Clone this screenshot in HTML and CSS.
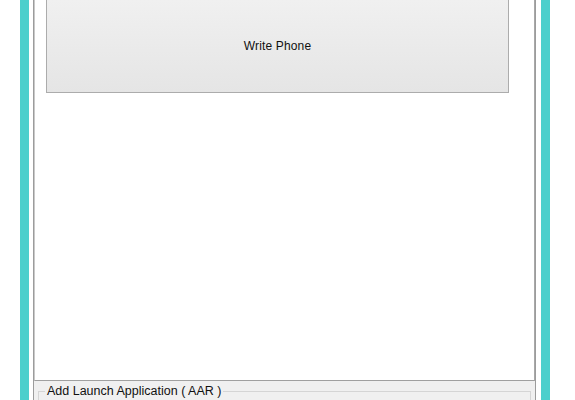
FILE: index.html
```html
<!DOCTYPE html>
<html lang="en">
  <head>
    <meta charset="utf-8">
    <title>Write Phone</title>
    <link rel="stylesheet" href="styles.css">
  </head>
  <body>
    <div class="frame">
      <div class="client">
        <div class="top">
          <button class="write-btn" type="button">Write Phone</button>
        </div>
        <div class="bottom">
          <fieldset class="group">
            <legend>Add Launch Application ( AAR )</legend>
          </fieldset>
        </div>
      </div>
    </div>
  </body>
</html>
```

FILE: styles.css
```css
html, body {
  margin: 0;
  background: #fff;
  font-family: "Liberation Sans", Arial, sans-serif;
  font-size: 12px;
  overflow: hidden;
}

.frame {
  margin-left: 20px;
  width: 530px;
  height: 400px;
  box-sizing: border-box;
  border-left: 9px solid #4ccfcc;
  border-right: 9px solid #4ccfcc;
  padding: 0 5px 0 4px;
  background: #fff;
  overflow: hidden;
}

.client {
  height: 100%;
  border-left: 1px solid #9c9c9c;
  border-right: 1px solid #9c9c9c;
  display: flex;
  flex-direction: column;
}

.top {
  height: 380px;
  flex: none;
  border-left: 1px solid #c9c9c9;
  border-right: 1px solid #a8a8a8;
  border-bottom: 1px solid #a0a0a0;
  background: #fff;
}

.write-btn {
  display: block;
  margin: -1px 0 0 11px;
  width: 463px;
  height: 94px;
  border: 1px solid #acacac;
  background: linear-gradient(#f0f0f0, #e5e5e5);
  font-family: "Liberation Sans", Arial, sans-serif;
  font-size: 12px;
  letter-spacing: 0.15px;
  color: #111;
  padding: 0;
}

.bottom {
  flex: 1;
  background: #f0f0f0;
  padding: 3px 4px 0 4px;
}

.group {
  margin: 0;
  padding: 0 6px;
  border: 1px solid #d5d5d5;
  height: 20px;
}

.group legend {
  padding: 0 2px;
  line-height: 15px;
  font-size: 12.5px;
  color: #111;
}
```
